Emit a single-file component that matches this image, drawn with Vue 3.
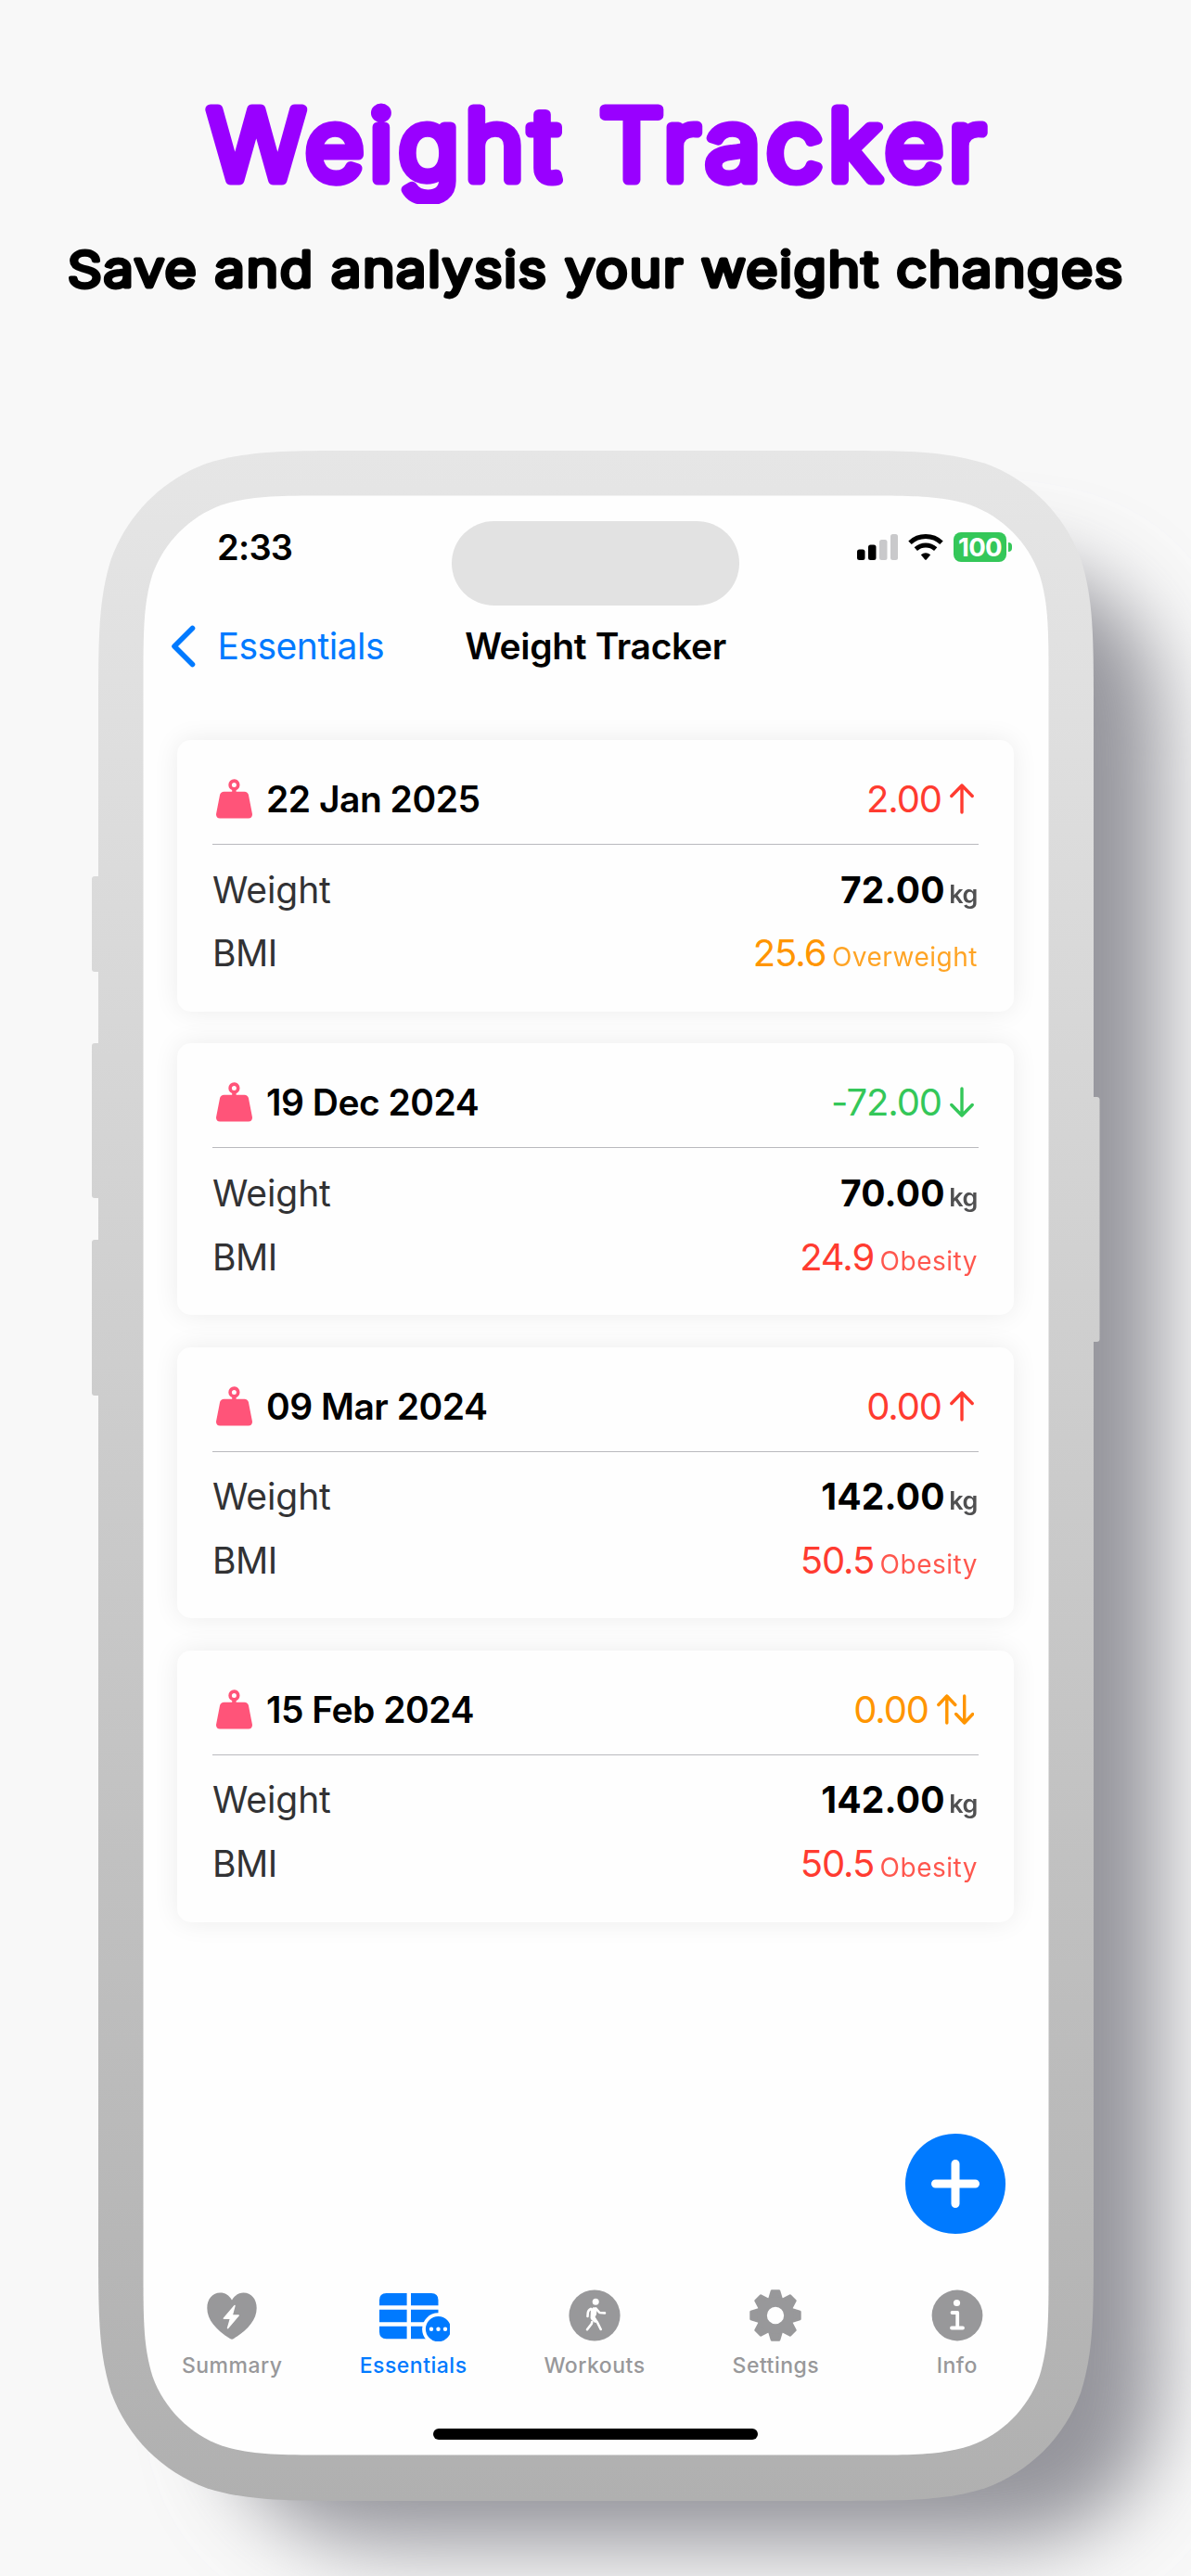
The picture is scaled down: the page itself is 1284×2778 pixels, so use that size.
<script setup>
const entries = [
  { date: '22 Jan 2025', delta: '2.00', trend: 'up', weight: '72.00', bmi: '25.6', level: 'Overweight', tone: 'orange' },
  { date: '19 Dec 2024', delta: '-72.00', trend: 'down', weight: '70.00', bmi: '24.9', level: 'Obesity', tone: 'red' },
  { date: '09 Mar 2024', delta: '0.00', trend: 'up', weight: '142.00', bmi: '50.5', level: 'Obesity', tone: 'red' },
  { date: '15 Feb 2024', delta: '0.00', trend: 'same', weight: '142.00', bmi: '50.5', level: 'Obesity', tone: 'red' },
]
const trendTone = { up: 'red', down: 'green', same: 'orange' }
const teeth = [0, 45, 90, 135, 180, 225, 270, 315]

// Rectangle with continuous-curvature corners.
function squircle(x, y, w, h, r) {
  const R = x + w
  const B = y + h
  const k = [1.52866, 1.08849, 0.86841, 0.63149, 0.37282, 0.16906, 0.07491].map((v) => v * r)
  return [
    `M${x + k[0]} ${y}H${R - k[0]}`,
    `C${R - k[1]} ${y} ${R - k[2]} ${y} ${R - k[3]} ${y + k[6]}`,
    `C${R - k[4]} ${y + k[5]} ${R - k[5]} ${y + k[4]} ${R - k[6]} ${y + k[3]}`,
    `C${R} ${y + k[2]} ${R} ${y + k[1]} ${R} ${y + k[0]}V${B - k[0]}`,
    `C${R} ${B - k[1]} ${R} ${B - k[2]} ${R - k[6]} ${B - k[3]}`,
    `C${R - k[5]} ${B - k[4]} ${R - k[4]} ${B - k[5]} ${R - k[3]} ${B - k[6]}`,
    `C${R - k[2]} ${B} ${R - k[1]} ${B} ${R - k[0]} ${B}H${x + k[0]}`,
    `C${x + k[1]} ${B} ${x + k[2]} ${B} ${x + k[3]} ${B - k[6]}`,
    `C${x + k[4]} ${B - k[5]} ${x + k[5]} ${B - k[4]} ${x + k[6]} ${B - k[3]}`,
    `C${x} ${B - k[2]} ${x} ${B - k[1]} ${x} ${B - k[0]}V${y + k[0]}`,
    `C${x} ${y + k[1]} ${x} ${y + k[2]} ${x + k[6]} ${y + k[3]}`,
    `C${x + k[5]} ${y + k[4]} ${x + k[4]} ${y + k[5]} ${x + k[3]} ${y + k[6]}`,
    `C${x + k[2]} ${y} ${x + k[1]} ${y} ${x + k[0]} ${y}Z`,
  ].join('')
}
const body = squircle(0, 0, 1073, 2211, 185)
const glass = squircle(48.5, 48.5, 976, 2113, 134)
const shade = squircle(135, 122, 1010, 2136, 165)
</script>

<template>
  <main class="page">
    <header class="hero">
      <svg class="headline" width="1284" height="220" viewBox="0 0 1284 220">
        <text class="big" x="224" y="193.5" textLength="844" lengthAdjust="spacingAndGlyphs">Weight Tracker</text>
      </svg>
      <svg class="headline" width="1284" height="120" viewBox="0 0 1284 120">
        <text class="sub" x="73" y="88.5" textLength="1139" lengthAdjust="spacingAndGlyphs">Save and analysis your weight changes</text>
      </svg>
    </header>

    <section class="phone">
      <svg class="frame" width="1073" height="2211" viewBox="0 0 1073 2211">
        <defs>
          <linearGradient id="metal" gradientUnits="userSpaceOnUse" x1="0" y1="0" x2="0" y2="2211">
            <stop offset="0" stop-color="#e6e6e6" />
            <stop offset="1" stop-color="#b0b0b0" />
          </linearGradient>
          <filter id="soft" filterUnits="userSpaceOnUse" x="-200" y="-200" width="1600" height="2800">
            <feGaussianBlur stdDeviation="43" />
          </filter>
        </defs>
        <path :d="shade" fill="#94949b" filter="url(#soft)" />
        <g fill="url(#metal)">
          <rect x="-7" y="459" width="12" height="103" rx="3" />
          <rect x="-7" y="639" width="12" height="167" rx="3" />
          <rect x="-7" y="851" width="12" height="168" rx="3" />
          <rect x="1066" y="697" width="13.5" height="264" rx="3" />
          <path :d="body" />
        </g>
        <path :d="glass" fill="#fefefe" />
      </svg>

      <div class="screen">
        <div class="island"></div>
        <div class="status">
          <span class="time">2:33</span>
          <div class="signals">
            <svg width="44" height="28" viewBox="0 0 44 28">
              <rect x="0" y="16.5" width="8.5" height="11.5" rx="2.5" />
              <rect x="12" y="11.5" width="8.5" height="16.5" rx="2.5" />
              <rect x="24" y="6" width="8.5" height="22" rx="2.5" fill="#c9c9cb" />
              <rect x="36" y="0" width="8" height="28" rx="2.5" fill="#c9c9cb" />
            </svg>
            <svg class="wifi" width="38" height="28" viewBox="0 0 38 28">
              <g fill="none" stroke="#000" stroke-width="5">
                <path d="M2 9.3Q9 2.6 19 2.6T36 9.3" />
                <path d="M8.3 16.2Q13 12.1 19 12.1T29.7 16.2" />
              </g>
              <path d="M13.8 22.2Q19 18.3 24.2 22.2L19.8 27.4Q19 28.3 18.2 27.4Z" />
            </svg>
            <div class="battery"><span>100</span></div>
            <i class="nub"></i>
          </div>
        </div>

        <nav class="nav">
          <a class="back">
            <svg width="27" height="46" viewBox="0 0 27 46"><path d="M23.5 3.5L4 23L23.5 42.5" fill="none" stroke="#007aff" stroke-width="5.6" stroke-linecap="round" stroke-linejoin="round" /></svg>
            <span>Essentials</span>
          </a>
          <h2>Weight Tracker</h2>
          <span></span>
        </nav>

        <div class="list">
          <article v-for="e in entries" :key="e.date" class="card">
            <div class="head">
              <svg width="39" height="43" viewBox="0 0 39 43">
                <circle cx="19.4" cy="6.4" r="4.3" fill="none" stroke="#ff5479" stroke-width="3.6" />
                <path d="M17.2 9.5h4.4v4.2H30.5c2.3 0 3.9 1.3 4.4 3.4l4 20.5c.5 2.8-1.2 5-4 5H4.1c-2.8 0-4.5-2.2-4-5l4-20.5c.5-2.1 2.1-3.4 4.4-3.4h8.7z" fill="#ff5479" />
              </svg>
              <b>{{ e.date }}</b>
              <span class="delta" :class="trendTone[e.trend]">
                <span class="num">{{ e.delta }}</span>
                <svg v-if="e.trend !== 'same'" width="26" height="33" viewBox="0 0 26 33">
                  <path :d="e.trend === 'up' ? 'M13 31V2M1.8 13.5L13 2L24.2 13.5' : 'M13 2V31M1.8 19.5L13 31L24.2 19.5'" />
                </svg>
                <svg v-else width="40" height="33" viewBox="0 0 40 33">
                  <path d="M10.8 31V2M1.8 11.5L10.8 2L19.8 11.5M29.7 2V31M20.7 21.5L29.7 31L38.7 21.5" />
                </svg>
              </span>
            </div>
            <hr />
            <div class="row">
              <span class="label">Weight</span>
              <span class="value"><b>{{ e.weight }}</b><small class="unit">kg</small></span>
            </div>
            <div class="row">
              <span class="label bmi">BMI</span>
              <span class="value" :class="e.tone"><span class="num">{{ e.bmi }}</span><small>{{ e.level }}</small></span>
            </div>
          </article>
        </div>

        <button class="fab">
          <svg width="52" height="52" viewBox="0 0 52 52"><path d="M26 4.5V47.5M4.5 26H47.5" stroke="#fff" stroke-width="9" stroke-linecap="round" /></svg>
        </button>

        <footer class="tabs">
          <div class="tab">
            <svg width="54" height="56" viewBox="0 0 54 56">
              <path d="M27 11.5C24 6 19.5 3.5 14.5 3.5C6 3.5 .3 10.5 .3 20C.3 33 10 43.5 25 53Q27 54.3 29 53C44 43.5 53.7 33 53.7 20C53.7 10.5 48 3.5 39.5 3.5C34.5 3.5 30 6 27 11.5Z" fill="currentColor" />
              <path d="M30 17.5L18.3 31.3H25.5L22.5 41.7L34.2 28H27.2Z" fill="#fff" stroke="#fff" stroke-width="1.4" stroke-linejoin="round" />
            </svg>
            <span>Summary</span>
          </div>
          <div class="tab active">
            <svg width="78" height="56" viewBox="-2 0 78 56">
              <g fill="currentColor">
                <path d="M7.5 4H29.6V17.3H0V11.5Q0 4 7.5 4ZM34 4H56Q63.5 4 63.5 11.5V17.3H34ZM0 21.7H29.6V35.3H0ZM34 21.7H63.5V35.3H34ZM0 39.7H29.6V53.3H7.5Q0 53.3 0 45.8ZM34 39.7H60V53.3H34Z" />
                <circle cx="63.5" cy="42.7" r="15.5" stroke="#fefefe" stroke-width="3.8" />
              </g>
              <g fill="#fff"><circle cx="56" cy="42.7" r="2.2" /><circle cx="63.5" cy="42.7" r="2.2" /><circle cx="71" cy="42.7" r="2.2" /></g>
            </svg>
            <span>Essentials</span>
          </div>
          <div class="tab">
            <svg width="56" height="56" viewBox="0 0 56 56">
              <circle cx="28" cy="28" r="27.6" fill="currentColor" />
              <circle cx="29.2" cy="13.2" r="3.5" fill="#fff" />
              <g fill="none" stroke="#fff" stroke-width="2.6" stroke-linecap="round" stroke-linejoin="round">
                <path d="M24 20.8Q21 22.5 20.8 25L20.5 29" />
                <path d="M29.5 20.5L33.4 25L39 25.4" />
                <path d="M25.3 35L24.8 37L20 43.2" />
                <path d="M28 31.5L31 35.5L34.7 43" />
              </g>
              <path d="M26.5 19.3Q29.5 18.6 30.6 20.8L30 27L28.6 29.5L31.2 34.5L28.5 36L24.3 32.5Q23.2 31.2 23.6 29L24 21.5Z" fill="#fff" />
            </svg>
            <span>Workouts</span>
          </div>
          <div class="tab">
            <svg width="58" height="58" viewBox="-29 -29 58 58">
              <g fill="currentColor" stroke="currentColor" stroke-width="3" stroke-linejoin="round">
                <path v-for="a in teeth" :key="a" d="M-6.8 -18L-4 -27.2H4L6.8 -18Z" :transform="`rotate(${a})`" />
              </g>
              <circle r="15" fill="none" stroke="currentColor" stroke-width="11" />
            </svg>
            <span>Settings</span>
          </div>
          <div class="tab">
            <svg width="56" height="56" viewBox="0 0 56 56">
              <circle cx="28" cy="28" r="27.4" fill="currentColor" />
              <circle cx="27.5" cy="14.5" r="3.6" fill="#fff" />
              <path d="M22.5 25H28.2V41.5M22 41.5H34" fill="none" stroke="#fff" stroke-width="3.8" stroke-linecap="round" stroke-linejoin="round" />
            </svg>
            <span>Info</span>
          </div>
        </footer>
        <div class="home"></div>
      </div>
    </section>
  </main>
</template>

<style>
body {
  background: #f8f8f8;
}
</style>

<style scoped>
.page {
  width: 1284px;
  height: 2778px;
  overflow: hidden;
  background: #f8f8f8;
  font-family: Inter, 'Liberation Sans', sans-serif;
  color: #000;
}
svg {
  display: block;
  flex: none;
}
.hero {
  height: 485.5px;
}
.headline text {
  font-weight: 300;
  stroke-linejoin: round;
  stroke-linecap: round;
}
.big {
  font-size: 104px;
  letter-spacing: 6px;
  fill: #9900ff;
  stroke: #9900ff;
  stroke-width: 11px;
}
.sub {
  font-size: 52px;
  letter-spacing: 1.8px;
  fill: #000;
  stroke: #000;
  stroke-width: 4.8px;
}
.phone {
  position: relative;
  width: 1073px;
  height: 2211px;
  margin-left: 105.5px;
}
.frame {
  position: absolute;
  inset: 0;
  overflow: visible;
}
.screen {
  position: relative;
  box-sizing: border-box;
  display: flex;
  flex-direction: column;
  width: 976px;
  height: 2162px;
  margin-left: 48.5px;
  padding-top: 48.5px;
}
.island {
  position: absolute;
  left: 333px;
  top: 76.5px;
  width: 310px;
  height: 91px;
  border-radius: 46px;
  background: #e2e2e2;
}
.status {
  display: flex;
  align-items: center;
  justify-content: space-between;
  height: 112px;
  padding: 0 39px 0 80px;
}
.time {
  font-size: 38px;
  font-weight: 600;
  letter-spacing: -0.7px;
}
.signals {
  display: flex;
  align-items: center;
}
.wifi {
  margin: 0 11px;
}
.battery {
  display: flex;
  align-items: center;
  justify-content: center;
  width: 57px;
  height: 32px;
  border-radius: 8px;
  background: #34c759;
  color: #fff;
  font-size: 27.5px;
  font-weight: 700;
  letter-spacing: -0.6px;
}
.nub {
  width: 4px;
  height: 10px;
  margin-left: 2px;
  border-radius: 0 5px 5px 0;
  background: #34c759;
}
.nav {
  display: grid;
  grid-template-columns: 1fr auto 1fr;
  align-items: center;
  height: 101px;
  margin-bottom: 1px;
  padding: 0 29px;
}
.back {
  display: flex;
  align-items: center;
  gap: 24px;
  padding-left: 0.5px;
  color: #007aff;
  font-size: 39px;
  letter-spacing: -0.5px;
}
.nav h2 {
  margin: 0;
  font-size: 39px;
  font-weight: 600;
  letter-spacing: -0.35px;
}
.list {
  display: flex;
  flex-direction: column;
  gap: 34.4px;
  flex: 1;
  padding: 50.3px 37px 0;
}
.card {
  box-sizing: border-box;
  height: 292.8px;
  padding: 15px 38px 0;
  border-radius: 15px;
  background: #fefefe;
  box-shadow: 0 0 28px rgba(0, 0, 0, 0.075);
  font-size: 39px;
}
.head {
  display: flex;
  align-items: center;
  height: 97px;
  padding: 0 5px 0 4px;
}
.head b {
  margin-left: 15px;
  font-weight: 600;
  letter-spacing: -0.5px;
}
.delta {
  display: flex;
  align-items: center;
  gap: 9px;
  margin-left: auto;
}
.delta path {
  fill: none;
  stroke: currentColor;
  stroke-width: 3.4px;
  stroke-linecap: round;
  stroke-linejoin: round;
}
.card hr {
  height: 1px;
  margin: 0 0 13.8px;
  border: 0;
  background: #b9b9be;
}
.row {
  display: flex;
  align-items: center;
  justify-content: space-between;
  height: 68.5px;
}
.label {
  color: #323234;
  letter-spacing: -0.1px;
}
.bmi {
  letter-spacing: -0.5px;
}
.num {
  font-size: 40px;
  letter-spacing: -1.1px;
}
.value {
  display: flex;
  align-items: baseline;
  gap: 6.5px;
  padding-right: 1px;
}
.value b {
  margin-right: -2px;
  font-weight: 700;
  letter-spacing: 0.2px;
}
.value small {
  font-size: 28px;
  letter-spacing: 0.5px;
  opacity: 0.85;
}
.value .unit {
  color: #323234;
  font-size: 27px;
  font-weight: 600;
  letter-spacing: -0.4px;
}
.red {
  color: #ff3b30;
}
.green {
  color: #34c759;
}
.orange {
  color: #ff9500;
}
.fab {
  position: absolute;
  left: 822px;
  top: 1815.5px;
  display: flex;
  align-items: center;
  justify-content: center;
  width: 107.5px;
  height: 107.5px;
  padding: 0;
  border: 0;
  border-radius: 50%;
  background: #007aff;
}
.tabs {
  display: flex;
  height: 156.5px;
  margin-left: -1.5px;
}
.tab {
  display: flex;
  flex-direction: column;
  align-items: center;
  width: 195.4px;
  padding-top: 7px;
  color: #98989a;
  font-size: 23px;
  font-weight: 500;
  line-height: 28px;
  letter-spacing: 0.5px;
}
.tab svg {
  height: 56px;
}
.tab span {
  margin-top: 12px;
}
.active {
  color: #007aff;
}
.home {
  width: 350px;
  height: 12.5px;
  margin: 0 auto 16.5px;
  border-radius: 7px;
  background: #000;
}
</style>
